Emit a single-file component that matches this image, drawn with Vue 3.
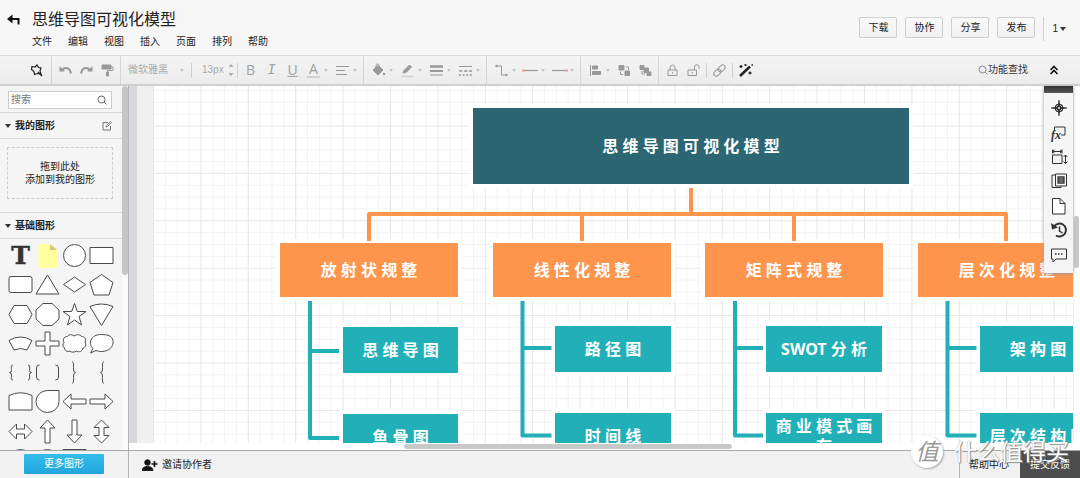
<script setup>
import { ref } from 'vue'

const query = ref('')
const fontSize = ref('13px')
const menus = ['文件', '编辑', '视图', '插入', '页面', '排列', '帮助']
const actions = ['下载', '协作', '分享', '发布']

const historyTools = [
  { label: '撤销', art: '<path d="M2.500 4v5.500h5.500z" fill="currentColor" stroke="none"/><path d="M5 8C8 4.500 13 5.500 14 11.500" stroke-width="2"/>' },
  { label: '恢复', art: '<path d="M14.500 4v5.500H9z" fill="currentColor" stroke="none"/><path d="M12 8C9 4.500 4 5.500 3 11.500" stroke-width="2"/>' },
  { label: '格式刷', art: '<path d="M3 3h9v4H3z" fill="currentColor"/><path d="M12 5h2v3.500H8.500V10"/><path d="M7.500 10h2v4h-2z" fill="currentColor"/>' }
]

const styleGroups = [
  {
    name: 'paint',
    tools: [
      { label: '填充', drop: true, art: '<path d="M3 8l5-4.500 5 4.500-5 5z" fill="currentColor"/><path d="M6 7V3.500a1.500 1.500 0 0 1 3 0V6"/><circle cx="14" cy="12" r="1.200" fill="currentColor" stroke="none"/>' },
      { label: '线条颜色', drop: true, art: '<path d="M4 11l1-2.500 5.500-5.500 2 2L7 10.500z" fill="currentColor"/><path d="M2.500 14.500h12" stroke="#cfcfcf" stroke-width="1.500"/>' },
      { label: '线条宽度', drop: true, art: '<path d="M2 4.500h13" stroke-width="2.500"/><path d="M2 9h13" stroke-width="2"/><path d="M2 13h13"/>' },
      { label: '线条样式', drop: true, art: '<path d="M2 4.500h13"/><path d="M2 9h3.500M7 9h3.500M12 9h3" stroke-width="1.500"/><path d="M2 13h13" stroke-width="1.500" stroke-dasharray="2 1.600"/>' }
    ]
  },
  {
    name: 'link',
    tools: [
      { label: '连线类型', drop: true, art: '<path d="M4 4h4.500v9H13"/><circle cx="3.500" cy="4" r="1.200" fill="currentColor" stroke="none"/><circle cx="13.500" cy="13" r="1.200" fill="currentColor" stroke="none"/>' },
      { label: '起点', drop: true, art: '<path d="M1 8.500h15" stroke-width="1.200"/><path d="M0 8.500h3" stroke="#f59a92" stroke-width="2"/>' },
      { label: '终点', drop: true, art: '<path d="M1 8.500h15" stroke-width="1.200"/><path d="M14 8.500h3" stroke="#f59a92" stroke-width="2"/>' }
    ]
  },
  {
    name: 'arrange',
    tools: [
      { label: '对齐', drop: true, art: '<path d="M3.500 3v11"/><path d="M5.500 4h5v3h-5zM5.500 9.500h8v3h-8z" fill="currentColor"/>' },
      { label: '置于顶层', art: '<path d="M3 3.500h5v4.500h-5z" fill="currentColor"/><path d="M9 9h4.500v4.500H9z" fill="currentColor"/><path d="M10 5h2.500v3M7 12.500H4.500V9.500"/>' },
      { label: '置于底层', art: '<path d="M3 3.500h4v4H3z" fill="currentColor"/><path d="M10 10h4v3.500h-4z" fill="currentColor"/><path d="M7 6h4.500v4.500H7z" fill="currentColor"/><path d="M5 9v3h3"/>' }
    ]
  }
]

const lockTools = [
  { label: '锁定', art: '<path d="M4 8h9v5.500H4z"/><path d="M6 8V5.500a2.500 2.500 0 0 1 5 0V8M8.500 10v1.500"/>' },
  { label: '解锁', art: '<path d="M3 8h8.500v5.500H3z"/><path d="M9.500 8V5a2.300 2.300 0 0 1 4.600 0v2M7.300 10v1.500"/>' }
]

const shapes = [
  '<text x="12.500" y="21" text-anchor="middle" font-family="DejaVu Serif" font-weight="700" font-size="25" fill="#333" stroke="#333" stroke-width=".500">T</text>',
  '<path d="M3.500 1H15l7 6v18H3.500z" fill="#ffff9e" stroke="none"/><path d="M15 1l7 6h-7z" fill="#cccc78" stroke="none"/>',
  '<circle cx="12.500" cy="12.500" r="11"/>',
  '<path d="M1 4.500h23v16H1z"/>',
  '<rect x="1" y="4.500" width="23" height="16" rx="2"/>',
  '<path d="M12.500 3L24 22H1z"/>',
  '<path d="M12.500 5L23.500 12.500 12.500 20 1.500 12.500z"/>',
  '<path d="M12.500 2.500L24 10.500 20 23H5L1 10.500z"/>',
  '<path d="M6 3.500h13l5 9-5 9H6l-5-9z"/>',
  '<path d="M8 1.500h9L24 8v9l-7 6.500H8L1 17V8z"/>',
  '<path d="M12.500 1.500l2.800 8H24l-7 5 2.600 8.500-7.100-5-7.100 5L8 14.500l-7-5h8.700z"/>',
  '<path d="M1 4.500Q12.500-.5 24 4.500L12.500 23.500z"/>',
  '<path d="M1 9.500Q12.500 2.500 24 9.500L19 19Q12.500 16 6 19z"/>',
  '<path d="M10 1h5v9h9v5h-9v9h-5v-9H1v-5h9z"/>',
  '<path d="M5.500 5.500C7 3 10 3.500 12 5 15 3 18.500 3.500 19.500 5.500 22.500 5.500 24.500 8 23 11c1.500 3 .5 5.500-2 6-.5 3.500-4 4.500-6.500 3-2 1.500-5 1.500-6.500 0-3 1-5 0-5.500-3C.500 15.500.500 13 2 11.500 .500 8.500 2 5.500 5.500 5.500z"/>',
  '<path d="M1.500 22l2.500-4.500C-1 13 1 3.500 12.500 3.500S24 8.500 24 12s-4 8.500-11.500 8.500c-2.500 0-4-.5-5.500-1z"/>',
  '<path d="M5 5C2.500 5 3.500 8 3.500 10.500Q3.500 12.500 1.500 12.500 3.500 12.500 3.500 15C3.500 17.500 2.500 20 5 20M20 5c2.500 0 1.500 3 1.500 5.500q0 2 2 2-2 0-2 2.500c0 2.500 1 5-1.500 5" fill="none"/>',
  '<path d="M4.500 5Q1.500 5 1.500 8v9q0 3 3 3M20.500 5q3 0 3 3v9q0 3-3 3" fill="none"/>',
  '<path d="M10 2c2 0 1.500 3 1.500 7q0 3.500 2 3.500-2 0-2 3.500c0 4 .5 7-1.500 7" fill="none"/>',
  '<path d="M15 2c-2 0-1.500 3-1.500 7q0 3.500-2 3.500 2 0 2 3.500c0 4-.5 7 1.500 7" fill="none"/>',
  '<path d="M1 6.500Q12.500 1 24 6.500V21H1z"/>',
  '<path d="M12.500 1.500H24v11A11.500 11 0 1 1 12.500 1.500z"/>',
  '<path d="M1 12.500L9 5v5h15v5H9v5z"/>',
  '<path d="M24 12.500L16 5v5H1v5h15v5z"/>',
  '<path d="M1 12.500L8.500 5v5h8V5l7.500 7.500-7.500 7.500v-5h-8v5z"/>',
  '<path d="M12.500 1L20 9h-5v15h-5V9H5z"/>',
  '<path d="M12.500 24L20 16h-5V1h-5v15H5z"/>',
  '<path d="M12.500 1L20 8.500h-5v8h5L12.500 24 5 16.500h5v-8H5z"/>',
  '<circle cx="12.500" cy="12.500" r="11"/>',
  '<circle cx="12.500" cy="12.500" r="11"/>',
  '<path d="M1 1.500h23v22H1z"/>'
]

const dockTools = [
  { label: '导航', art: '<circle cx="9" cy="9" r="4"/><path d="M9 1v16M1 9h16M6 6l6 6M12 6l-6 6"/><path d="M9 1l1.500 6.500L17 9l-6.500 1.500L9 17l-1.500-6.500L1 9l6.500-1.500z" fill="currentColor" stroke="none"/><circle cx="9" cy="9" r="1" fill="#f5f5f5" stroke="none"/>' },
  { label: '公式', art: '<path d="M4.500 7V3h10.500v8h-4"/><text x="1" y="14.500" font-family="Liberation Serif" font-style="italic" font-weight="700" font-size="12" fill="currentColor" stroke="none">fx</text>' },
  { label: '尺寸', art: '<path d="M2.500 7h9.500v8.500H2.500z"/><path d="M2.500 3.500h9.500M2.500 1.500v4M12 1.500v4M4.500 2l-2 1.500 2 1.500M10 2l2 1.500L10 5M15.500 7v8.500M13.500 9l2-2 2 2M13.500 13.500l2 2 2-2"/>' },
  { label: '数据', art: '<path d="M5.500 3h-3.500v12.500h9V14"/><path d="M5.500 2h11v12h-11z"/><path d="M8 5h6v6H8zM8 7h6M8 9h6" stroke-width="1.300"/>' },
  { label: '页面设置', art: '<path d="M2.500 1.500H10l5 5v10.500H2.500z" fill="#fff"/><path d="M10 1.500v5h5"/>' },
  { label: '历史', art: '<path d="M4 5.500A6.500 6.500 0 1 1 6 14.500" stroke-width="2"/><path d="M1 2l1 6.500 6-2z" fill="currentColor" stroke="none"/><path d="M9.500 5.500V10l3 2" stroke-width="1.500"/>' },
  { label: '评论', art: '<path d="M1.500 3h15v10H6l-3 3V13H1.500z"/><path d="M5 8h8" stroke-dasharray="1.500 1.500" stroke-width="1.500"/>' }
]

const nodes = [
  { text: '思 维 导 图 可 视 化 模 型', kind: 'root', x: 320, y: 22, w: 436, h: 76 },
  { text: '放 射 状 规 整', kind: 'branch', x: 127, y: 157, w: 178, h: 54 },
  { text: '线 性 化 规 整', kind: 'branch', x: 340, y: 157, w: 178, h: 54 },
  { text: '矩 阵 式 规 整', kind: 'branch', x: 552, y: 157, w: 178, h: 54 },
  { text: '层 次 化 规 整', kind: 'branch', x: 765, y: 157, w: 178, h: 54 },
  { text: '思 维 导 图', kind: 'leaf', x: 190, y: 241, w: 115, h: 46 },
  { text: '路 径 图', kind: 'leaf', x: 402, y: 240, w: 116, h: 46 },
  { text: 'SWOT 分 析', kind: 'leaf', x: 613, y: 240, w: 116, h: 46 },
  { text: '架 构 图', kind: 'leaf', x: 827, y: 240, w: 116, h: 46 },
  { text: '鱼 骨 图', kind: 'leaf', x: 190, y: 328, w: 115, h: 46 },
  { text: '时 间 线', kind: 'leaf', x: 402, y: 327, w: 116, h: 46 },
  { text: '商 业 模 式 画 布', kind: 'leaf', x: 613, y: 327, w: 116, h: 46 },
  { text: '层 次 结 构 图', kind: 'leaf', x: 827, y: 327, w: 116, h: 46 }
]

const box = (n) => ({ left: n.x + 'px', top: n.y + 'px', width: n.w + 'px', height: n.h + 'px' })
</script>

<template>
  <div class="app">
    <header class="top">
      <button class="back" aria-label="返回">
        <svg width="14" height="12" viewBox="0 0 14 12"><path d="M0 5l5.500-4.500v9z" fill="#111" /><path d="M4 5h7.500v5.500" fill="none" stroke="#111" stroke-width="2" /></svg>
      </button>
      <div class="heading">
        <h1>思维导图可视化模型</h1>
        <nav class="menus"><button v-for="m in menus" :key="m">{{ m }}</button></nav>
      </div>
      <div class="actions">
        <button v-for="a in actions" :key="a" class="action">{{ a }}</button>
        <button class="people">1<i class="caret dark"></i></button>
      </div>
    </header>

    <div class="toolbar">
      <div class="group first">
        <button class="tool ink" aria-label="图形">
          <svg width="17" height="17" viewBox="0 0 17 17"><path d="M4 4.500l3 .5 2-2 1.500 2.500 2.500.5-1 3 1 3-3.500-.500L6.500 12.500l-.500-3L3.500 7.500z" stroke-width="1.200" /><path d="M10 10l4 4" stroke-width="1.500" /></svg>
        </button>
      </div>
      <div class="group history">
        <button v-for="t in historyTools" :key="t.label" class="tool" :aria-label="t.label">
          <svg width="17" height="17" viewBox="0 0 17 17" v-html="t.art"></svg>
        </button>
      </div>
      <div class="group text-group">
        <label class="family">
          <select aria-label="字体"><option>微软雅黑</option></select>
          <i class="caret"></i>
        </label>
        <label class="size">
          <input v-model="fontSize" aria-label="字号" />
          <svg width="6" height="12" viewBox="0 0 6 12"><path d="M3 0l2.500 3h-5zM3 12l2.500-3h-5z" fill="#aaa" stroke="none" /></svg>
        </label>
        <button class="tool letter">B</button>
        <button class="tool letter slant">I</button>
        <button class="tool letter under">U</button>
        <button class="tool drop letter" aria-label="字体颜色"><span class="tint">A</span><i class="caret"></i></button>
        <button class="tool drop" aria-label="文字对齐">
          <svg width="17" height="17" viewBox="0 0 17 17"><path d="M2 4.500h13M2 8.500h9M2 12.500h11" stroke-width="1.200" /></svg><i class="caret"></i>
        </button>
      </div>
      <div v-for="g in styleGroups" :key="g.name" class="group">
        <button v-for="t in g.tools" :key="t.label" class="tool" :class="{ drop: t.drop }" :aria-label="t.label">
          <svg width="17" height="17" viewBox="0 0 17 17" v-html="t.art"></svg><i v-if="t.drop" class="caret"></i>
        </button>
      </div>
      <div class="group last">
        <button v-for="t in lockTools" :key="t.label" class="tool" :aria-label="t.label">
          <svg width="17" height="17" viewBox="0 0 17 17" v-html="t.art"></svg>
        </button>
        <span class="tick"></span>
        <button class="tool" aria-label="链接">
          <svg width="17" height="17" viewBox="0 0 17 17"><g transform="rotate(-45 8.500 8.500)"><rect x="1.500" y="6" width="8" height="5" rx="2.500" /><rect x="7.500" y="6" width="8" height="5" rx="2.500" /></g></svg>
        </button>
        <span class="tick"></span>
        <button class="tool ink" aria-label="美化">
          <svg width="17" height="17" viewBox="0 0 17 17"><path d="M3 14L13 4.500" stroke-width="2.500" /><path d="M4 3v3M2.500 4.500h3M8.500 2v2M7.500 3h2M13 9.500v3M11.500 11h3M14.500 3h1.500" stroke-width="1.300" /></svg>
        </button>
      </div>
      <div class="lookup">
        <button class="find"><svg width="10" height="10" viewBox="0 0 10 10"><circle cx="4.500" cy="4.500" r="3.500" /><path d="M7 7l2.500 2.500" /></svg>功能查找</button>
        <button class="fold" aria-label="收起"><svg width="10" height="10" viewBox="0 0 10 10"><path d="M1.500 5L5 1.500 8.500 5M1.500 9L5 5.500 8.500 9" stroke-width="1.600" /></svg></button>
      </div>
    </div>

    <main class="body">
      <aside class="side">
        <div class="library">
          <label class="search">
            <input v-model="query" placeholder="搜索" aria-label="搜索" />
            <svg width="10" height="10" viewBox="0 0 10 10"><circle cx="4.500" cy="4.500" r="3.500" /><path d="M7 7l2.500 2.500" /></svg>
          </label>
          <h2><i class="caret dark"></i>我的图形
            <button class="edit" aria-label="编辑我的图形"><svg width="10" height="10" viewBox="0 0 10 10"><path d="M6 1.500H1v7.500h7.500V5M4 6l.5-1.500L8.500 .5l1 1-4 4z" /></svg></button>
          </h2>
          <div class="mine"><p>拖到此处<br />添加到我的图形</p></div>
          <h2><i class="caret dark"></i>基础图形</h2>
          <div class="shapes">
            <button v-for="(s, i) in shapes" :key="i" :aria-label="'图形 ' + (i + 1)">
              <svg width="25" height="25" viewBox="0 0 25 25" v-html="s"></svg>
            </button>
          </div>
        </div>
        <div class="track"><div class="thumb"></div></div>
      </aside>

      <section class="stage">
        <div class="ruler"></div>
        <div class="margin"></div>
        <div class="sheet">
          <svg class="lines" width="100%" height="100%">
            <defs>
              <pattern id="grid" width="47.400" height="47.400" y="39.500" patternUnits="userSpaceOnUse">
                <path d="M12.350 0v47.400M24.200 0v47.400M36.050 0v47.400M0 12.350h47.400M0 24.200h47.400M0 36.050h47.400" stroke="#f3f3f3" />
                <path d="M.500 0v47.400M0 .500h47.400" stroke="#e6e6e6" />
              </pattern>
            </defs>
            <rect width="100%" height="100%" fill="url(#grid)" stroke="none" />
            <g class="halo">
              <rect v-for="n in nodes" :key="n.text" :x="n.x - 4" :y="n.y - 4" :width="n.w + 8" :height="n.h + 8" />
            </g>
            <g class="orange"><path d="M538 102v26M216 155v-27H853v27M429 128v27M641 128v27" /></g>
            <g class="teal">
              <path d="M157 215v137h29M157 265h29" />
              <path d="M369.500 215v134.500h29M369.500 262h29" />
              <path d="M582 215v134.500h28M582 262h28" />
              <path d="M794.500 215v134.500h29M794.500 262h29" />
            </g>
          </svg>
          <div v-for="n in nodes" :key="n.text" class="node" :class="n.kind" :style="box(n)">{{ n.text }}</div>
        </div>
        <div class="vbar"><div class="vthumb"></div></div>
        <div class="hbar"><div class="hthumb"></div></div>
        <div class="dock">
          <div class="grip"></div>
          <div class="dock-list">
            <button v-for="d in dockTools" :key="d.label" :aria-label="d.label">
              <svg width="18" height="18" viewBox="0 0 18 18" v-html="d.art"></svg>
            </button>
          </div>
        </div>
      </section>
    </main>

    <footer class="foot">
      <div class="more-wrap"><button class="more">更多图形</button></div>
      <button class="invite">
        <svg width="16" height="12" viewBox="0 0 16 12"><circle cx="5.500" cy="3.500" r="2.800" fill="#111" /><path d="M0 11.500c0-5.500 11-5.500 11 0z" fill="#111" /><path d="M12.500 2v6M9.500 5h6" stroke="#111" stroke-width="1.600" /></svg>
        邀请协作者
      </button>
      <a class="help" href="#">帮助中心</a>
      <button class="feedback">提交反馈</button>
      <div class="mark"><span class="seal">值</span><span class="brand">什么值得买</span></div>
    </footer>
  </div>
</template>

<style>
html,
body {
  margin: 0;
  background: #f5f5f5;
}
</style>

<style scoped>
.app {
  display: flex;
  flex-direction: column;
  height: 100vh;
  overflow: hidden;
  background: #f6f6f6;
  color: #222;
  font: 10px/14px "Liberation Sans", "Noto Sans CJK SC", sans-serif;
}
.app * { box-sizing: border-box; }
button, input, select {
  margin: 0;
  padding: 0;
  border: 0;
  background: none;
  color: inherit;
  font: inherit;
}
svg { display: block; fill: none; stroke: currentColor; flex: none; }
.caret {
  display: block;
  flex: none;
  border: 2px solid transparent;
  border-top: 3px solid #c4c4c4;
  border-bottom: 0;
}
.caret.dark { border-width: 3px; border-top-width: 4px; border-top-color: #333; border-bottom: 0; }

.top { display: flex; flex: none; height: 55px; background: #f7f7f7; }
.back { width: 32px; padding-left: 7px; align-self: flex-start; margin-top: 14px; }
.back svg { stroke: none; }
h1 { margin: 9px 0 0; font-size: 16px; line-height: 22px; font-weight: 400; }
.menus { display: flex; gap: 16px; margin-top: 4px; }
.actions { display: flex; gap: 8px; margin: 17px 14px 0 auto; align-items: flex-start; }
.action {
  width: 38px;
  height: 21px;
  border: 1px solid #cfcfcf;
  border-radius: 2px;
  background: linear-gradient(#fafafa, #f0f0f0);
}
.people { display: flex; align-items: center; gap: 2px; height: 24px; padding-left: 8px; border-left: 1px solid #d0d0d0; }

.toolbar {
  display: flex;
  flex: none;
  height: 31px;
  border-top: 1px solid #d9d9d9;
  border-bottom: 2px solid #d0d0d0;
  background: linear-gradient(#f4f4f4, #ececec);
  color: #999;
}
.group { display: flex; align-items: center; padding: 0 2px 0 4px; border-right: 1px solid #d6d6d6; }
.group.first { padding-left: 26px; padding-right: 4px; }
.group.history { padding-left: 3px; }
.group.text-group { padding-left: 7px; }
.group.last { border: 0; padding-left: 3px; }
.tool { display: flex; align-items: center; justify-content: center; width: 21px; height: 21px; }
.tool.drop { width: 29px; justify-content: space-between; padding: 0 4px 0 2px; }
.ink { color: #222; }
.letter { font: 14px/16px "Open Sans", "Noto Sans", sans-serif; color: #a0a0a0; }
.slant { font-family: "Liberation Mono", monospace; font-style: italic; }
.under { text-decoration: underline; }
.tint { width: 13px; height: 16px; margin-left: 2px; border-bottom: 2px solid #d0d0d0; line-height: 14px; }
.tick { width: 1px; height: 15px; margin: 0 2px; background: #d0d0d0; }
.family { display: flex; align-items: center; width: 64px; height: 15px; border-right: 1px solid #d0d0d0; color: #aaa; }
.family select { width: 52px; appearance: none; }
.size { display: flex; align-items: center; width: 46px; height: 15px; padding-left: 10px; margin-right: 2px; border-right: 1px solid #d0d0d0; color: #aaa; }
.size input { width: 26px; }
.lookup { display: flex; align-items: center; gap: 21px; margin-left: auto; padding-right: 21px; color: #333; }
.find { display: flex; align-items: center; }
.find svg { color: #888; }
.fold { color: #111; }

.body { display: flex; flex: 1; min-height: 0; }
.side { display: flex; width: 129px; border-right: 1px solid #b4b4b4; }
.library { flex: 1; overflow: hidden; background: #f5f5f5; }
.search {
  display: flex;
  align-items: center;
  width: 104px;
  height: 18px;
  margin: 5px 8px 3px;
  padding: 0 4px 0 2px;
  border: 1px solid #ccc;
  background: #fff;
  color: #666;
}
.search input { flex: 1; min-width: 0; outline: 0; }
.search input::placeholder { color: #777; opacity: 1; }
h2 {
  display: flex;
  align-items: center;
  gap: 4px;
  height: 27px;
  margin: 0;
  padding: 0 10px 0 5px;
  border: solid #d8d8d8;
  border-width: 1px 0;
  font-size: 10px;
  font-weight: 700;
}
.edit { margin-left: auto; color: #777; }
.mine { height: 73px; padding: 8px 9px 13px 7px; }
.mine p {
  display: grid;
  place-content: center;
  height: 52px;
  margin: 0;
  border: 1px dashed #ccc;
  line-height: 13px;
  text-align: center;
}
.shapes {
  display: grid;
  grid-template-columns: repeat(4, 27px);
  grid-template-rows: repeat(8, 1fr);
  height: 234px;
  margin: 2px 0 0 7px;
}
.shapes button { display: grid; place-items: center; }
.shapes svg { overflow: visible; fill: #fff; stroke: #4a4a4a; }
.track { width: 6px; background: #fafafa; }
.thumb { height: 189px; border-radius: 3px; background: #c6c6c6; }

.stage {
  position: relative;
  display: grid;
  flex: 1;
  min-width: 0;
  grid-template: 1fr 7px / 8px 16px 1fr 7px;
  background: #fff;
}
.ruler { background: #d8d9df; }
.margin { background: #f0f0f0; }
.sheet { position: relative; overflow: hidden; background: #fff; }
.lines { position: absolute; inset: 0; }
.halo { fill: #fff; stroke: none; }
.orange { stroke: #ff944d; stroke-width: 4; stroke-linejoin: round; }
.teal { stroke: #21b0b8; stroke-width: 4; stroke-linejoin: round; }
.node {
  position: absolute;
  display: grid;
  place-items: center;
  align-content: center;
  padding: 0 6px;
  color: #fff;
  font: 700 16px/20px "Noto Sans", "Noto Sans CJK SC", sans-serif;
  text-align: center;
}
.root { background: #2b6672; }
.branch { background: #ff944d; }
.leaf { background: #21b0b8; }
.vbar { border-left: 1px solid #eee; }
.vthumb { height: 52px; margin: 130px 1px 0 0; border-radius: 3px; background: #c8c8c8; }
.hbar { grid-column: 1 / 5; padding: 1px 0; }
.hthumb { width: 328px; height: 5px; margin-left: 275px; border-radius: 3px; background: #c8c8c8; }
.dock { position: absolute; top: 0; right: 7px; width: 29px; background: #f5f5f5; box-shadow: 0 1px 3px #999; color: #333; }
.grip { height: 7px; background: linear-gradient(#333, #555); }
.dock-list { display: grid; grid-template-rows: repeat(7, 1fr); height: 171px; margin: 3px 0 6px; overflow: hidden; }
.dock-list button { display: grid; place-items: center; min-height: 0; }

.foot { position: relative; display: flex; flex: none; height: 28px; border-top: 1px solid #a8a8a8; background: #f1f1f1; }
.more-wrap { width: 129px; padding: 3px 0 0 24px; border-right: 1px solid #b4b4b4; }
.more { width: 80px; height: 20px; border-radius: 1px; background: linear-gradient(#35bdea, #22a5dc); color: #fff; }
.invite { display: flex; align-items: center; gap: 4px; padding-left: 13px; }
.help { display: flex; align-items: center; width: 61px; margin-left: auto; padding-left: 9px; border-left: 1px solid #b4b4b4; color: #222; text-decoration: none; }
.feedback { width: 60px; background: #4d4d4d; color: #fff; }
.mark {
  position: absolute;
  right: 11px;
  bottom: 10px;
  display: flex;
  align-items: center;
  gap: 11px;
  color: #fff;
  font-size: 23px;
  line-height: 32px;
  pointer-events: none;
}
.seal { width: 32px; height: 32px; border-radius: 50%; background: #fff; box-shadow: 1px 1px 2px #aaa; color: #999; text-align: center; font-style: italic; }
.brand { text-shadow: 1px 1px 1px #888, 0 0 1px #999; }
</style>
